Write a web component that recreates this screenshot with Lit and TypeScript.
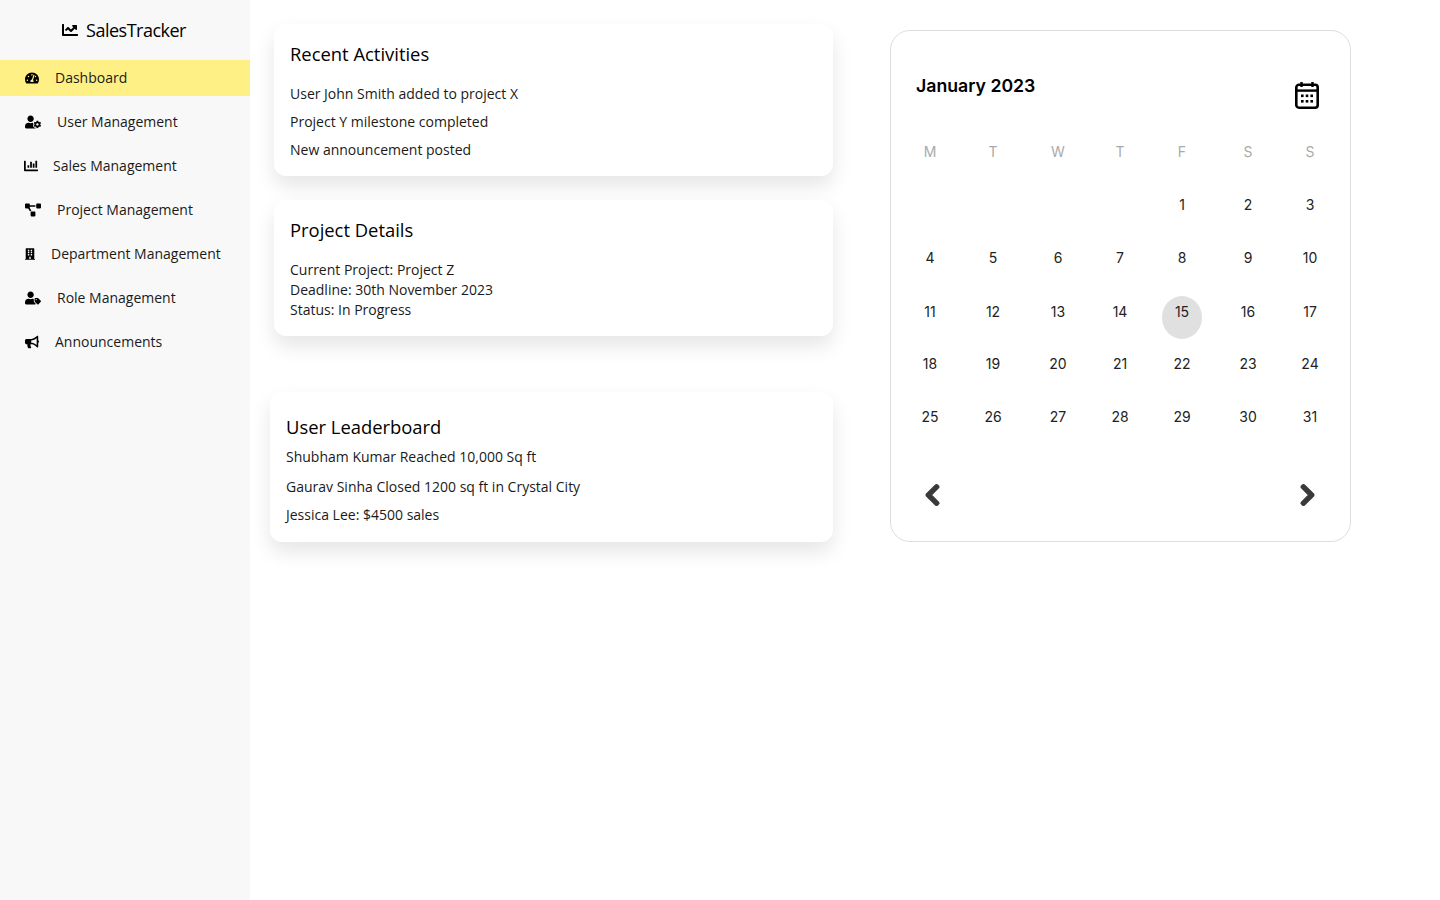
import { LitElement, html, css, svg } from "lit";
import { customElement } from "lit/decorators.js";

const icons: Record<string, { w: number; vb: string; d: string }> = {
    dashboard: {
        w: 14,
        vb: "0 0 576 512",
        d: "M288 32C128.94 32 0 160.94 0 320c0 52.8 14.25 102.26 39.06 144.8 5.61 9.62 16.3 15.2 27.44 15.2h443c11.14 0 21.83-5.58 27.44-15.2C561.75 422.26 576 372.8 576 320c0-159.06-128.94-288-288-288zm0 64c14.71 0 26.58 10.13 30.32 23.65-1.11 2.26-2.64 4.23-3.45 6.67l-9.22 27.67c-5.13 3.49-10.97 6.01-17.64 6.01-17.67 0-32-14.33-32-32S270.33 96 288 96zM96 384c-17.67 0-32-14.33-32-32s14.33-32 32-32 32 14.33 32 32-14.33 32-32 32zm48-160c-17.67 0-32-14.33-32-32s14.33-32 32-32 32 14.33 32 32-14.33 32-32 32zm246.77-72.41l-61.33 184C343.13 347.33 352 364.54 352 384c0 11.72-3.38 22.55-8.88 32H232.88c-5.5-9.45-8.88-20.28-8.88-32 0-33.94 26.5-61.43 59.9-63.59l61.34-184.01c4.17-12.56 17.73-19.45 30.36-15.17 12.57 4.19 19.35 17.79 15.17 30.36zm14.66 57.2l15.52-46.55c3.47-1.29 7.13-2.23 11.05-2.23 17.67 0 32 14.33 32 32s-14.33 32-32 32c-11.38-.01-20.89-6.28-26.57-15.22zM480 384c-17.67 0-32-14.33-32-32s14.33-32 32-32 32 14.33 32 32-14.33 32-32 32z",
    },
    userCog: {
        w: 16,
        vb: "0 0 640 512",
        d: "M610.5 373.3c2.6-14.1 2.6-28.5 0-42.6l25.8-14.9c3-1.7 4.3-5.2 3.3-8.5-6.7-21.6-18.2-41.2-33.2-57.4-2.3-2.5-6-3.1-9-1.4l-25.8 14.9c-10.9-9.3-23.4-16.5-36.9-21.3v-29.8c0-3.4-2.4-6.4-5.7-7.1-22.3-5-45-4.8-66.2 0-3.3.7-5.7 3.7-5.7 7.1v29.8c-13.5 4.8-26 12-36.9 21.3l-25.8-14.9c-2.9-1.7-6.7-1.1-9 1.4-15 16.2-26.5 35.8-33.2 57.4-1 3.3.4 6.8 3.3 8.5l25.8 14.9c-2.6 14.1-2.6 28.5 0 42.6l-25.8 14.9c-3 1.7-4.3 5.2-3.3 8.5 6.7 21.6 18.2 41.1 33.2 57.4 2.3 2.5 6 3.1 9 1.4l25.8-14.9c10.9 9.3 23.4 16.5 36.9 21.3v29.8c0 3.4 2.4 6.4 5.7 7.1 22.3 5 45 4.8 66.2 0 3.3-.7 5.7-3.7 5.7-7.1v-29.8c13.5-4.8 26-12 36.9-21.3l25.8 14.9c2.9 1.7 6.7 1.1 9-1.4 15-16.2 26.5-35.8 33.2-57.4 1-3.3-.4-6.8-3.3-8.5l-25.8-14.9zM496 400.5c-26.8 0-48.5-21.8-48.5-48.5s21.8-48.5 48.5-48.5 48.5 21.8 48.5 48.5-21.7 48.5-48.5 48.5zM224 256c70.7 0 128-57.3 128-128S294.7 0 224 0 96 57.3 96 128s57.3 128 128 128zm201.2 226.5c-2.3-1.2-4.6-2.6-6.8-3.9l-7.9 4.6c-6 3.4-12.8 5.3-19.6 5.3-10.9 0-21.4-4.6-28.9-12.6-18.3-19.8-32.3-43.9-40.2-69.6-5.5-17.7 1.9-36.4 17.9-45.7l7.9-4.6c-.1-2.6-.1-5.2 0-7.8l-7.9-4.6c-16-9.2-23.4-28-17.9-45.7.9-2.9 2.2-5.8 3.2-8.7-3.8-.3-7.5-1.2-11.4-1.2h-16.7c-22.2 10.2-46.9 16-72.9 16s-50.6-5.8-72.9-16h-16.7C60.2 288 0 348.2 0 422.4V464c0 26.5 21.5 48 48 48h352c10.1 0 19.5-3.2 27.2-8.5-1.2-3.8-2-7.7-2-11.8v-9.2z",
    },
    chartBar: {
        w: 14,
        vb: "0 0 512 512",
        d: "M332.8 320h38.4c6.4 0 12.8-6.4 12.8-12.8V172.8c0-6.4-6.4-12.8-12.8-12.8h-38.4c-6.4 0-12.8 6.4-12.8 12.8v134.4c0 6.4 6.4 12.8 12.8 12.8zm96 0h38.4c6.4 0 12.8-6.4 12.8-12.8V76.8c0-6.4-6.4-12.8-12.8-12.8h-38.4c-6.4 0-12.8 6.4-12.8 12.8v230.4c0 6.4 6.4 12.8 12.8 12.8zm-288 0h38.4c6.4 0 12.8-6.4 12.8-12.8v-70.4c0-6.4-6.4-12.8-12.8-12.8h-38.4c-6.4 0-12.8 6.4-12.8 12.8v70.4c0 6.4 6.4 12.8 12.8 12.8zm96 0h38.4c6.4 0 12.8-6.4 12.8-12.8V108.8c0-6.4-6.4-12.8-12.8-12.8h-38.4c-6.4 0-12.8 6.4-12.8 12.8v198.4c0 6.4 6.4 12.8 12.8 12.8zM496 384H64V80c0-8.84-7.16-16-16-16H16C7.16 64 0 71.16 0 80v336c0 17.67 14.33 32 32 32h464c8.84 0 16-7.16 16-16v-32c0-8.84-7.16-16-16-16z",
    },
    diagram: {
        w: 16,
        vb: "0 0 640 512",
        d: "M384 320H256c-17.67 0-32 14.33-32 32v128c0 17.67 14.33 32 32 32h128c17.67 0 32-14.33 32-32V352c0-17.67-14.33-32-32-32zM192 32c0-17.67-14.33-32-32-32H32C14.33 0 0 14.33 0 32v128c0 17.67 14.33 32 32 32h95.72l73.16 128.04C211.11 301.79 230.04 288 256 288h.28L192 175.51V128h224V64H192V32zM608 0H480c-17.67 0-32 14.33-32 32v128c0 17.67 14.33 32 32 32h128c17.67 0 32-14.33 32-32V32c0-17.67-14.33-32-32-32z",
    },
    building: {
        w: 10,
        vb: "0 0 448 512",
        d: "M436 480h-20V24c0-13.255-10.745-24-24-24H56C42.745 0 32 10.745 32 24v456H12c-6.627 0-12 5.373-12 12v20h448v-20c0-6.627-5.373-12-12-12zM128 76c0-6.627 5.373-12 12-12h40c6.627 0 12 5.373 12 12v40c0 6.627-5.373 12-12 12h-40c-6.627 0-12-5.373-12-12V76zm0 96c0-6.627 5.373-12 12-12h40c6.627 0 12 5.373 12 12v40c0 6.627-5.373 12-12 12h-40c-6.627 0-12-5.373-12-12v-40zm52 148h-40c-6.627 0-12-5.373-12-12v-40c0-6.627 5.373-12 12-12h40c6.627 0 12 5.373 12 12v40c0 6.627-5.373 12-12 12zm76 160h-64v-84c0-6.627 5.373-12 12-12h40c6.627 0 12 5.373 12 12v84zm64-172c0 6.627-5.373 12-12 12h-40c-6.627 0-12-5.373-12-12v-40c0-6.627 5.373-12 12-12h40c6.627 0 12 5.373 12 12v40zm0-96c0 6.627-5.373 12-12 12h-40c-6.627 0-12-5.373-12-12v-40c0-6.627 5.373-12 12-12h40c6.627 0 12 5.373 12 12v40zm0-96c0 6.627-5.373 12-12 12h-40c-6.627 0-12-5.373-12-12V76c0-6.627 5.373-12 12-12h40c6.627 0 12 5.373 12 12v40z",
    },
    userTag: {
        w: 16,
        vb: "0 0 640 512",
        d: "M630.6 364.9l-90.3-90.2c-12-12-28.3-18.7-45.3-18.7h-79.3c-17.7 0-32 14.3-32 32v79.2c0 17 6.7 33.2 18.7 45.2l90.3 90.2c12.5 12.5 32.8 12.5 45.3 0l92.5-92.5c12.6-12.4 12.6-32.7.1-45.2zm-182.8-21c-13.3 0-24-10.7-24-24s10.7-24 24-24 24 10.7 24 24c0 13.2-10.7 24-24 24zm-223.8-88c70.7 0 128-57.3 128-128C352 57.3 294.7 0 224 0S96 57.3 96 128c0 70.6 57.3 128 128 128zm127.8 111.2V294c-12.2-3.6-24.9-6.2-38.2-6.2h-16.7c-22.2 10.2-46.9 16-72.9 16s-50.6-5.8-72.9-16h-16.7C60.2 288 0 348.2 0 422.4V464c0 26.5 21.5 48 48 48h352c15.5 0 29.1-7.5 37.9-18.9l-58-58c-18.1-18.1-28.1-42.2-28.1-67.9z",
    },
    bullhorn: {
        w: 14,
        vb: "0 0 576 512",
        d: "M576 240c0-23.63-12.95-44.04-32-55.12V32.01C544 23.26 537.02 0 512 0c-7.12 0-14.19 2.38-19.98 7.02l-85.03 68.03C364.28 109.19 310.66 128 256 128H64c-35.35 0-64 28.65-64 64v96c0 35.35 28.65 64 64 64h33.7c-1.39 10.48-2.18 21.14-2.18 32 0 39.77 9.26 77.35 25.56 110.94 5.19 10.69 16.52 17.06 28.4 17.06h74.28c26.05 0 41.69-29.84 25.9-50.56-16.4-21.52-26.15-48.36-26.15-77.44 0-11.11 1.62-21.79 4.41-32H256c54.66 0 108.28 18.81 150.98 52.95l85.03 68.03a32.023 32.023 0 0 0 19.98 7.02c24.92 0 32-22.78 32-32V295.13C563.05 284.04 576 263.63 576 240zm-96 141.42l-33.05-26.44C392.95 311.78 325.12 288 256 288v-96c69.12 0 136.95-23.78 190.95-66.98L480 98.58v282.84z",
    },
};

const chartLine =
    "M496 384H64V80c0-8.84-7.16-16-16-16H16C7.16 64 0 71.16 0 80v336c0 17.67 14.33 32 32 32h464c8.84 0 16-7.16 16-16v-32c0-8.84-7.16-16-16-16zM464 96H345.94c-21.38 0-32.09 25.85-16.97 40.97l32.4 32.4L288 242.75l-73.37-73.37c-12.5-12.5-32.76-12.5-45.25 0l-68.69 68.69c-6.25 6.25-6.25 16.38 0 22.63l22.62 22.62c6.25 6.25 16.38 6.25 22.63 0L192 237.25l73.37 73.37c12.5 12.5 32.76 12.5 45.25 0l96-96 32.4 32.4c15.12 15.12 40.97 4.41 40.97-16.97V112c.01-8.84-7.15-16-15.99-16z";
const chevronLeft =
    "M34.52 239.03L228.87 44.69c9.37-9.37 24.57-9.37 33.94 0l22.67 22.67c9.36 9.36 9.37 24.52.04 33.9L131.49 256l154.02 154.75c9.34 9.38 9.32 24.54-.04 33.9l-22.67 22.67c-9.37 9.37-24.57 9.37-33.94 0L34.52 272.97c-9.37-9.37-9.37-24.57 0-33.94z";
const chevronRight =
    "M285.476 272.971L91.132 467.314c-9.373 9.373-24.569 9.373-33.941 0l-22.667-22.667c-9.357-9.357-9.375-24.522-.04-33.901L188.505 256 34.484 101.255c-9.335-9.379-9.317-24.544.04-33.901l22.667-22.667c9.373-9.373 24.569-9.373 33.941 0L285.476 239.03c9.373 9.372 9.373 24.568 0 33.941z";

// shift: the chart icon sits 1px left of the others and its label 2px left
const navItems = [
    { label: "Dashboard", icon: "dashboard", active: true, shift: 0 },
    { label: "User Management", icon: "userCog", shift: 0 },
    { label: "Sales Management", icon: "chartBar", shift: -1 },
    { label: "Project Management", icon: "diagram", shift: 0 },
    { label: "Department Management", icon: "building", shift: 0 },
    { label: "Role Management", icon: "userTag", shift: 0 },
    { label: "Announcements", icon: "bullhorn", shift: 0 },
];

const weekDays = ["M", "T", "W", "T", "F", "S", "S"];
const blanks = [0, 1, 2, 3];
const days = Array.from({ length: 31 }, (_, i) => i + 1);

@customElement("app-root")
export class AppRoot extends LitElement {
    navIcon(name: string, shift: number) {
        const ic = icons[name];
        return html`<svg
            class="nav_icon"
            style="margin:0 ${shift}px"
            width=${ic.w}
            height="14"
            viewBox=${ic.vb}
            fill="#000"
        >
            ${svg`<path d=${ic.d}></path>`}
        </svg>`;
    }

    render() {
        return html`
            <div class="layout">
                <aside class="sidebar">
                    <div class="logo">
                        <svg width="16" height="16" viewBox="0 0 512 512" fill="#000"><path d=${chartLine}></path></svg>
                        <span>SalesTracker</span>
                    </div>
                    <nav class="nav">
                        ${navItems.map(
                            (item) => html`
                                <div class="nav_item ${item.active ? "active" : ""}">
                                    ${this.navIcon(item.icon, item.shift)}
                                    <span>${item.label}</span>
                                </div>
                            `
                        )}
                    </nav>
                </aside>
                <main class="content">
                    <div class="column">
                        <section class="card recent">
                            <h2>Recent Activities</h2>
                            <p>User John Smith added to project X</p>
                            <p>Project Y milestone completed</p>
                            <p>New announcement posted</p>
                        </section>
                        <section class="card project">
                            <h2>Project Details</h2>
                            <p>Current Project: Project Z</p>
                            <p>Deadline: 30th November 2023</p>
                            <p>Status: In Progress</p>
                        </section>
                        <section class="card leaders">
                            <h2>User Leaderboard</h2>
                            <p>Shubham Kumar Reached 10,000 Sq ft</p>
                            <p>Gaurav Sinha Closed 1200 sq ft in Crystal City</p>
                            <p>Jessica Lee: $4500 sales</p>
                        </section>
                    </div>
                    <section class="calendar">
                        <div class="cal_head">
                            <div class="cal_title">January 2023</div>
                            <svg class="cal_icon" width="24" height="28" viewBox="0 0 24 28" fill="none">
                                <path d="M6.5 1v5M17.5 1v5" stroke="#000" stroke-width="2.4"></path>
                                <rect x="1.3" y="3.8" width="21.4" height="22.9" rx="2.6" stroke="#000" stroke-width="2.6"></rect>
                                <path d="M1.3 9.6h21.4" stroke="#000" stroke-width="2.4"></path>
                                <g fill="#000">
                                    <rect x="6" y="13.5" width="2.6" height="2.6"></rect>
                                    <rect x="10.7" y="13.5" width="2.6" height="2.6"></rect>
                                    <rect x="15.4" y="13.5" width="2.6" height="2.6"></rect>
                                    <rect x="6" y="19" width="2.6" height="2.6"></rect>
                                    <rect x="10.7" y="19" width="2.6" height="2.6"></rect>
                                    <rect x="15.4" y="19" width="2.6" height="2.6"></rect>
                                </g>
                            </svg>
                        </div>
                        <div class="cal_grid">
                            ${weekDays.map((d) => html`<div class="cell week">${d}</div>`)}
                            ${blanks.map(() => html`<div class="cell"></div>`)}
                            ${days.map((d) => html`<div class="cell ${d === 15 ? "today" : ""}">${d}</div>`)}
                        </div>
                        <div class="cal_nav">
                            <svg width="15" height="24" viewBox="0 0 320 512"><path d=${chevronLeft}></path></svg>
                            <svg width="15" height="24" viewBox="0 0 320 512"><path d=${chevronRight}></path></svg>
                        </div>
                    </section>
                </main>
            </div>
        `;
    }

    static styles = css`
        :host {
            display: block;
            font-family: "Open Sans", sans-serif;
            color: #000;
        }
        .layout {
            display: flex;
            min-height: 900px;
            background: #fff;
        }
        .sidebar {
            width: 250px;
            flex: none;
            background: #f8f8f8;
        }
        .logo {
            height: 60px;
            display: flex;
            align-items: center;
            justify-content: center;
            gap: 8px;
            font-size: 18px;
            letter-spacing: -0.5px;
            padding-right: 2px;
            box-sizing: border-box;
        }
        .nav {
            display: flex;
            flex-direction: column;
            gap: 8px;
        }
        .nav_item {
            height: 36px;
            display: flex;
            align-items: center;
            gap: 16px;
            padding-left: 25px;
            font-size: 14px;
            color: #1a1a1a;
        }
        .nav_item span {
            margin-top: -2px;
        }
        .nav_item.active {
            background: #fff085;
        }
        .nav_icon {
            flex: none;
        }
        .content {
            display: flex;
            align-items: flex-start;
            padding-left: 20px;
        }
        .column {
            width: 563px;
            display: flex;
            flex-direction: column;
            align-items: flex-end;
            padding-top: 24px;
        }
        .card {
            background: #fff;
            border-radius: 12px;
            box-shadow: 0 10px 20px rgba(0, 0, 0, 0.1);
            padding: 16px;
            box-sizing: border-box;
        }
        .card h2 {
            margin: 0;
            font-size: 18.4px;
            line-height: 28px;
            font-weight: 500;
        }
        .card p {
            margin: 0;
            font-size: 14px;
            line-height: 20px;
            color: #1a1a1a;
        }
        .recent {
            width: 559px;
            padding-bottom: 12px;
        }
        .recent h2 {
            margin-bottom: 12px;
        }
        .recent p {
            line-height: 28px;
        }
        .project {
            width: 559px;
            margin-top: 24px;
        }
        .project h2 {
            margin-bottom: 16px;
        }
        .leaders {
            width: 563px;
            margin-top: 56px;
            padding-top: 21px;
            padding-bottom: 17px;
        }
        .leaders h2 {
            margin-bottom: 6px;
        }
        .leaders p + p {
            margin-top: 10px;
        }
        .leaders p:last-child {
            margin-top: 8px;
        }
        .calendar {
            width: 461px;
            height: 512px;
            box-sizing: border-box;
            margin-left: 57px;
            margin-top: 30px;
            border: 1px solid #ddd;
            border-radius: 20px;
            display: flex;
            flex-direction: column;
        }
        .cal_head {
            height: 104px;
            display: flex;
            justify-content: space-between;
            padding: 41px 31px 0 25px;
            box-sizing: border-box;
        }
        .cal_title {
            font-family: "Inter", sans-serif;
            font-size: 17.7px;
            font-weight: 600;
            line-height: 28px;
        }
        .cal_icon {
            margin-top: 9px;
        }
        .cal_grid {
            display: grid;
            grid-template-columns: 62px 64px 66px 58px 66px 66px 58px;
            grid-template-rows: 54px 53px 54px 52px 53px 43px;
            margin-left: 8px;
            font-family: "Inter", sans-serif;
            font-size: 14px;
        }
        .cell {
            text-align: center;
            line-height: 32px;
            color: #222;
        }
        .cell.week {
            line-height: 33px;
            color: #aaa;
        }
        .cell.today {
            width: 40px;
            height: 43px;
            justify-self: center;
            background: #e0e0e0;
            border-radius: 50%;
        }
        .cal_nav {
            display: flex;
            justify-content: space-between;
            margin-top: 39px;
            padding: 0 35px 0 34px;
        }
        .cal_nav svg {
            overflow: visible;
            fill: #3a3a3a;
            stroke: #3a3a3a;
            stroke-width: 36px;
            stroke-linejoin: round;
        }
    `;
}
